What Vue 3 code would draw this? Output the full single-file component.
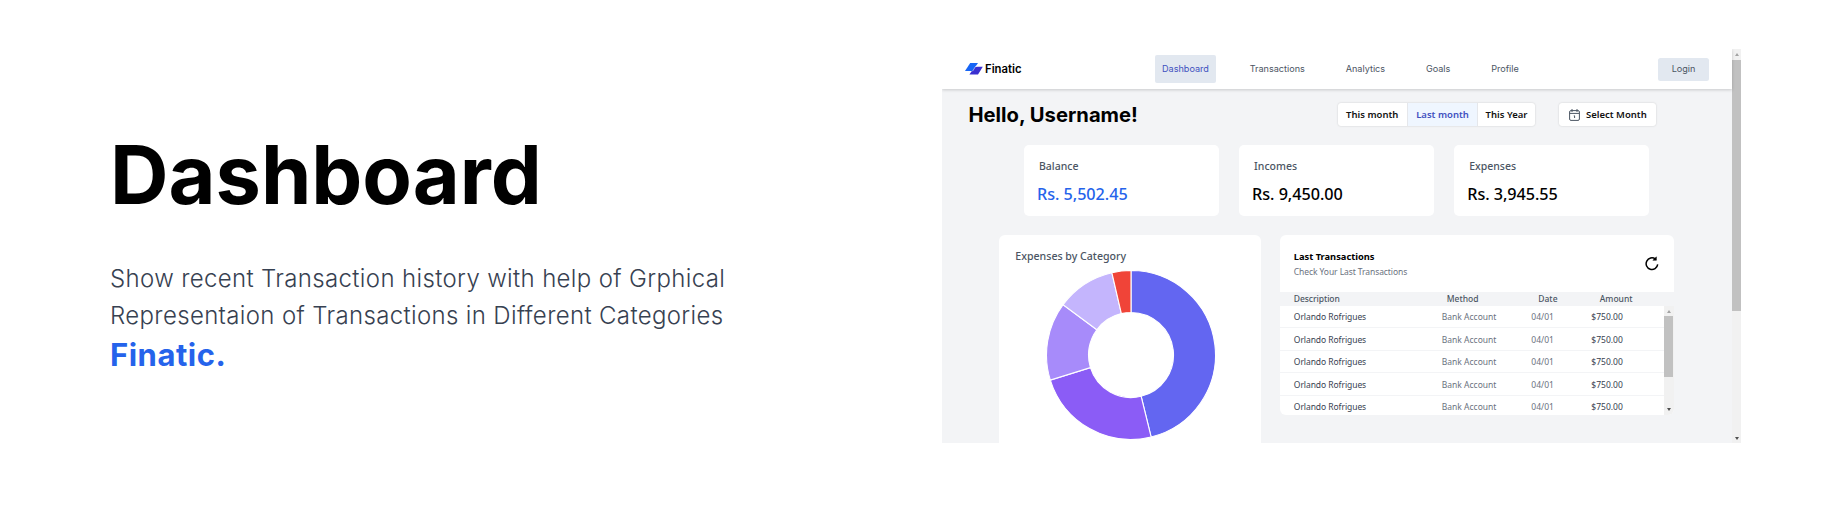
<script setup>
const links = ['Dashboard', 'Transactions', 'Analytics', 'Goals', 'Profile']
const stats = [
  { label: 'Balance', value: 'Rs. 5,502.45', accent: true },
  { label: 'Incomes', value: 'Rs. 9,450.00' },
  { label: 'Expenses', value: 'Rs. 3,945.55' },
]
const rows = Array.from({ length: 5 }, () => ({
  name: 'Orlando Rofrigues', method: 'Bank Account', date: '04/01', amount: '$750.00',
}))

// Donut slices, in degrees clockwise from the top
const slices = [
  { from: 0, to: 166.2, color: '#6366f1' },
  { from: 166.2, to: 252.7, color: '#8b5cf6' },
  { from: 252.7, to: 306.5, color: '#a78bfa' },
  { from: 306.5, to: 346.9, color: '#c4b5fd' },
  { from: 346.9, to: 360, color: '#f04438' },
]
const point = (deg, r) => {
  const a = (deg * Math.PI) / 180
  return `${(85 + r * Math.sin(a)).toFixed(2)} ${(85 - r * Math.cos(a)).toFixed(2)}`
}
const arc = ({ from, to }) =>
  `M${point(from, 84.5)}A84.5 84.5 0 0 1 ${point(to, 84.5)}L${point(to, 42.5)}A42.5 42.5 0 0 0 ${point(from, 42.5)}Z`
</script>

<template>
  <main class="hero">
    <section class="copy">
      <h1>Dashboard</h1>
      <p>
        Show recent Transaction history with help of Grphical<br />
        Representaion of Transactions in Different Categories
      </p>
      <strong>Finatic.</strong>
    </section>

    <section class="shot">
      <div class="page">
        <nav class="nav">
          <div class="brand">
            <svg width="18" height="12" viewBox="0 0 18 12">
              <path d="M9.8 3.8H17.8L13 11.6H4.4Z" fill="#3a2fd0" />
              <path d="M5.2 0H13L7.4 8H0Z" fill="#1765f5" />
              <path d="M12.2 3.4H10.6L7.6 8.2" fill="none" stroke="#fff" stroke-width=".5" />
            </svg>
            <span>Finatic</span>
          </div>
          <div class="links">
            <a v-for="(l, i) in links" :key="l" :class="{ active: i === 0 }">{{ l }}</a>
          </div>
          <button class="login">Login</button>
        </nav>

        <header class="bar">
          <h2>Hello, Username!</h2>
          <div class="range">
            <button>This month</button>
            <button class="on">Last month</button>
            <button>This Year</button>
          </div>
          <button class="select">
            <svg width="11" height="12" viewBox="0 0 11 12" fill="none" stroke="#4b5563" stroke-width="1">
              <rect x=".6" y="1.6" width="9.8" height="9.8" rx="1.4" />
              <path d="M.6 4.4H10.4M3 0V3M8 0V3M4.8 6.8H5.6V9" />
            </svg>
            <span>Select Month</span>
          </button>
        </header>

        <div class="stats">
          <article v-for="s in stats" :key="s.label">
            <div class="label">{{ s.label }}</div>
            <div class="value" :class="{ accent: s.accent }">{{ s.value }}</div>
          </article>
        </div>

        <div class="panels">
          <article class="chart">
            <h3>Expenses by Category</h3>
            <svg width="170" height="170" viewBox="0 0 170 170">
              <path v-for="s in slices" :key="s.from" :d="arc(s)" :fill="s.color" stroke="#fff" stroke-width="1.1" />
            </svg>
          </article>

          <article class="table">
            <div class="head">
              <div>
                <h4>Last Transactions</h4>
                <small>Check Your Last Transactions</small>
              </div>
              <svg width="14" height="15" viewBox="0 0 14 15" fill="none" stroke="#000" stroke-width="1.5">
                <path d="M10.4 3A5.8 5.8 0 1 0 12.7 8.4" />
                <path d="M11.4 .8V4.3H7.9Z" fill="#000" stroke-width=".5" />
              </svg>
            </div>
            <div class="row cols">
              <span>Description</span><span>Method</span><span>Date</span><span>Amount</span>
            </div>
            <div class="body">
              <div class="list">
                <div v-for="(r, i) in rows" :key="i" class="row">
                  <span>{{ r.name }}</span><span>{{ r.method }}</span><span>{{ r.date }}</span><span>{{ r.amount }}</span>
                </div>
              </div>
              <div class="scroll inner"><i class="up"></i><b></b><i class="down"></i></div>
            </div>
          </article>
        </div>
      </div>
      <div class="scroll outer"><i class="up"></i><b></b><i class="down"></i></div>
    </section>
  </main>
</template>

<style>
html, body { margin: 0; background: #fff; }
</style>

<style scoped>
* { box-sizing: border-box; margin: 0; }
.hero { display: flex; width: 1845px; height: 523px; overflow: hidden; font-family: Inter, sans-serif; color: #000; }
.copy { width: 942px; padding: 125.5px 0 0 110px; flex: none; }
h1 { font-size: 81px; line-height: 98px; font-weight: 700; }
p { margin-top: 36px; font-size: 24px; line-height: 37.4px; font-weight: 300; color: #374151; letter-spacing: .35px; white-space: nowrap; }
strong { display: block; font-size: 31px; line-height: 42px; letter-spacing: .5px; color: #2563eb; }

.shot { display: flex; width: 799px; height: 394px; margin-top: 49px; overflow: hidden; flex: none; background: #f3f4f6; }
.page { width: 790px; flex: none; font-family: "Noto Sans", sans-serif; }
button { font: inherit; border: 0; padding: 0; }
.nav { position: relative; display: flex; align-items: center; height: 40px; background: #fff; box-shadow: 0 1px 3px rgba(0,0,0,.18); font: 400 9.1px/12px Inter, sans-serif; color: #4b5563; }
.brand { display: flex; align-items: center; gap: 2px; width: 190px; margin-left: 23px; color: #000; font-size: 11.3px; font-weight: 600; }
.links { display: flex; gap: 26.8px; width: 503px; }
.links a { padding: 8px 7px; border-radius: 2px; }
.links .active { background: #e2e8f0; color: #3f51bf; }
.login { width: 51px; height: 23px; border-radius: 2.5px; background: #e2e8f0; color: #4b5563; }

.bar { display: flex; align-items: center; height: 51px; padding-left: 26.5px; font-size: 9.5px; font-weight: 600; color: #111; }
h2 { width: 369px; font: 700 20.2px/24px Inter, sans-serif; color: #000; white-space: nowrap; }
.range { display: flex; width: 197.5px; height: 23px; border-radius: 3px; background: #fff; box-shadow: 0 0 2px rgba(0,0,0,.18); overflow: hidden; }
.range button { width: 69.5px; background: none; color: #111; white-space: nowrap; }
.range .on { width: 71px; background: #eff6ff; color: #3f51bf; border: solid #e5e7eb; border-width: 0 1px; }
.range button:last-child { width: 57px; }
.select { display: flex; align-items: center; gap: 6px; width: 97px; height: 23px; margin-left: 24px; padding-left: 10px; background: #fff; border-radius: 3px; box-shadow: 0 0 2px rgba(0,0,0,.18); color: #111; white-space: nowrap; }

.stats { display: flex; gap: 19.8px; padding: 5px 0 0 82px; }
.stats article { width: 195.3px; height: 71px; border-radius: 5px; background: #fff; padding: 14px 0 0 13px; }
.label { padding-left: 2px; font-size: 10.5px; line-height: 15px; font-weight: 500; color: #4b5563; }
.value { margin-top: 8.5px; font-size: 16.2px; line-height: 22px; font-weight: 500; letter-spacing: -.04px; }
.accent { color: #2563eb; }

.panels { display: flex; gap: 19.5px; padding: 19.3px 0 0 57.3px; }
.chart { display: flex; flex-direction: column; width: 261.5px; height: 220px; border-radius: 6px; background: #fff; padding: 14px 16px 0; }
h3 { font-size: 10.6px; line-height: 15px; font-weight: 500; color: #4b5563; }
.chart svg { margin: 5.8px 0 0 30.7px; flex: none; }
.table { width: 393.5px; height: 179.5px; border-radius: 6px; background: #fff; overflow: hidden; font-size: 8.5px; }
.head { display: flex; justify-content: space-between; height: 56.5px; padding: 15px 15px 0 13.5px; }
.head svg { margin-top: 6px; }
h4 { font-size: 9.3px; line-height: 14px; font-weight: 700; }
small { display: block; font-size: 8.5px; letter-spacing: -.08px; line-height: 15px; color: #6b7280; }
.row { display: grid; grid-template-columns: 148px 89.5px 60px 1fr; align-items: center; height: 22.5px; padding-left: 13.5px; border-bottom: 1px solid #f3f4f6; color: #6b7280; white-space: nowrap; }
.row > :first-child, .row > :last-child { color: #374151; }
.row > :first-child { letter-spacing: -.06px; }
.cols { grid-template-columns: 153px 91.5px 61.5px 1fr; height: 14px; background: #f3f4f6; font-weight: 500; color: #4b5563; }
.cols > :first-child, .cols > :last-child { color: #4b5563; }
.body { display: flex; height: 109px; }
.list { flex: 1; height: 109px; overflow: hidden; }

.scroll { display: flex; flex-direction: column; align-items: center; background: #f1f1f1; flex: none; }
.scroll b { width: 100%; background: #c1c1c1; }
.scroll i { width: 0; height: 0; border: solid transparent; border-width: 0 2.5px; }
.scroll .up { border-bottom: 3px solid #a3a3a3; }
.scroll .down { margin-top: auto; border-top: 3px solid #505050; }
.outer { width: 9px; padding: 4px 0 3px; }
.outer b { height: 251.5px; margin-top: 3.5px; }
.inner { width: 10px; padding: 4px 0; }
.inner b { height: 61.5px; margin-top: 3px; width: 9px; }
</style>
